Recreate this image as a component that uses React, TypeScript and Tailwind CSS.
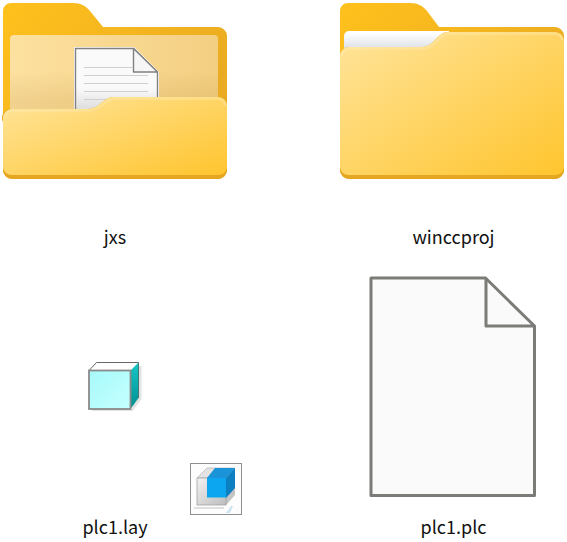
function FolderOpen() {
  return (
    <svg width="230" height="190" viewBox="0 0 230 190" className="block">
      <defs>
        <linearGradient id="b1" x1="0" y1="0" x2="1" y2="0.6">
          <stop offset="0" stopColor="#FFC11C" />
          <stop offset="1" stopColor="#E9A922" />
        </linearGradient>
        <linearGradient id="p1" x1="0" y1="0" x2="1" y2="0">
          <stop offset="0" stopColor="#FDE1A0" />
          <stop offset="1" stopColor="#F3CF82" />
        </linearGradient>
        <linearGradient id="p1s" x1="0" y1="0" x2="0" y2="1">
          <stop offset="0.4" stopColor="#B08030" stopOpacity="0" />
          <stop offset="0.72" stopColor="#B08030" stopOpacity="0.16" />
        </linearGradient>
        <linearGradient id="f1" x1="0" y1="0" x2="1" y2="1">
          <stop offset="0" stopColor="#FFE49B" />
          <stop offset="1" stopColor="#FFC52E" />
        </linearGradient>
        <linearGradient id="d1" x1="0" y1="0" x2="0" y2="1">
          <stop offset="0.55" stopColor="#FAFAFA" />
          <stop offset="0.85" stopColor="#DEDEDE" />
        </linearGradient>
      </defs>
      <path d="M3 11a8 8 0 0 1 8-8h62c8 0 13 3 17 8l13 16h115a9 9 0 0 1 9 9v134a9 9 0 0 1-9 9H12a9 9 0 0 1-9-9Z" fill="url(#b1)" />
      <rect x="10" y="35" width="208" height="90" rx="4" fill="url(#p1)" />
      <rect x="10" y="35" width="208" height="90" rx="4" fill="url(#p1s)" />
      <path d="M75.500 48.500h58l24 24V120h-82Z" fill="url(#d1)" stroke="#fff" strokeWidth="3" />
      <path d="M75.500 48.500h58l24 24V120h-82Z" fill="url(#d1)" stroke="#808080" strokeWidth="1.4" />
      <path d="M133.500 48.500v23.500h24Z" fill="#F6F6F6" stroke="#808080" strokeWidth="1.4" strokeLinejoin="round" />
      <path d="M84 67.500h48M84 75.500h64M84 83.500h64M84 91.500h64M84 99.500h64" stroke="#CFCFCF" strokeWidth="1" />
      <path d="M3 122a9 9 0 0 1 9-13h73c8 0 12-2 16-6 5-4 8-6 13-6h104a9 9 0 0 1 9 9v64a9 9 0 0 1-9 9H12a9 9 0 0 1-9-9Z" fill="#E5A722" />
      <path d="M3 118a9 9 0 0 1 9-9h73c8 0 12-2 16-6 5-4 8-6 13-6h104a9 9 0 0 1 9 9v61a9 8 0 0 1-9 8H12a9 8 0 0 1-9-8Z" fill="url(#f1)" />
      <path d="M4.500 118a7.500 7.500 0 0 1 7.500-7.500h73c9 0 13-2 17-6 5-4 8-6 12-6h104a8 8 0 0 1 7.500 7" fill="none" stroke="#FFEBB0" strokeOpacity="0.4" strokeWidth="3" />
    </svg>
  );
}

function FolderClosed() {
  return (
    <svg width="227" height="190" viewBox="340 0 227 190" className="block">
      <defs>
        <linearGradient id="b2" x1="0" y1="0" x2="1" y2="0.6">
          <stop offset="0" stopColor="#FFC11C" />
          <stop offset="1" stopColor="#E9A922" />
        </linearGradient>
        <linearGradient id="p2" x1="0" y1="0" x2="0" y2="1">
          <stop offset="0.1" stopColor="#FFFFFF" />
          <stop offset="1" stopColor="#D8DCE2" />
        </linearGradient>
        <linearGradient id="f2" x1="0" y1="0" x2="1" y2="1">
          <stop offset="0" stopColor="#FFE49B" />
          <stop offset="1" stopColor="#FFC52E" />
        </linearGradient>
      </defs>
      <path d="M340 11a8 8 0 0 1 8-8h62c8 0 13 3 17 8l12 16h116a9 9 0 0 1 9 9v134a9 9 0 0 1-9 9H349a9 9 0 0 1-9-9Z" fill="url(#b2)" />
      <path d="M344 36a5 5 0 0 1 5-5h100v20H344Z" fill="url(#p2)" />
      <path d="M340 56a9 9 0 0 1 9-9h70c8 0 11-2 15-6 5-5 8-9 14-9h107a9 9 0 0 1 9 9v129a9 9 0 0 1-9 9H349a9 9 0 0 1-9-9Z" fill="#E5A722" />
      <path d="M340 56a9 9 0 0 1 9-9h70c8 0 11-2 15-6 5-5 8-9 14-9h107a9 9 0 0 1 9 9v126a9 8 0 0 1-9 8H349a9 8 0 0 1-9-8Z" fill="url(#f2)" />
      <path d="M341.500 56a7.500 7.500 0 0 1 7.500-7.500h70c9 0 12-2 16-6 5-5 8-9 13-9h107a8 8 0 0 1 7.500 7" fill="none" stroke="#FFEBB0" strokeOpacity="0.4" strokeWidth="3" />
    </svg>
  );
}

function TealCube() {
  return (
    <svg width="54" height="52" viewBox="88 362 54 52" className="block">
      <defs>
        <linearGradient id="tf" x1="0" y1="0" x2="1" y2="1">
          <stop offset="0" stopColor="#A6FAFA" />
          <stop offset="1" stopColor="#C6FFFF" />
        </linearGradient>
        <linearGradient id="ts" x1="0" y1="0" x2="0" y2="1">
          <stop offset="0" stopColor="#18C6C6" />
          <stop offset="1" stopColor="#008E90" />
        </linearGradient>
      </defs>
      <path d="M139 366h2.500v33l-9 12H92v-1.500h40Z" fill="#E2E2E2" />
      <path d="M89 370l7.500-7.500h42L130.500 370Z" fill="#fff" />
      <path d="M89.500 370l7-7.500h42" fill="none" stroke="#666" strokeWidth="1" />
      <path d="M130.500 370.500l8-8V398l-8 11Z" fill="url(#ts)" />
      <path d="M138.500 362.500V398" stroke="#3E6E6E" strokeWidth="0.9" />
      <rect x="89" y="370.500" width="41.500" height="38.500" fill="url(#tf)" stroke="#8A8A8A" strokeWidth="1.8" />
    </svg>
  );
}

function BlueCube() {
  return (
    <svg width="52" height="52" viewBox="190 463 52 52" className="block">
      <defs>
        <linearGradient id="gc" x1="0" y1="0" x2="1" y2="1">
          <stop offset="0" stopColor="#F2F2F2" />
          <stop offset="1" stopColor="#BDBDBD" />
        </linearGradient>
      </defs>
      <rect x="190.500" y="463.500" width="51" height="51" fill="#FDFDFD" stroke="#8F8F8F" />
      <path d="M197 478l10-10h28l-9 10Z" fill="#E3E3E3" stroke="#AAA" strokeWidth="0.6" />
      <path d="M226 478l9-10v27l-9 10Z" fill="#C4C4C4" />
      <rect x="197" y="478" width="29" height="27" fill="url(#gc)" stroke="#A4A4A4" strokeWidth="0.8" />
      <path d="M207 478l8-10h20l-9 10Z" fill="#1A93D8" />
      <path d="M226 478l9-10v20l-9 10Z" fill="#0B7FC0" />
      <rect x="207" y="478" width="19" height="19.500" fill="#0CA6F0" />
      <path d="M194 507h30v2h-30Z" fill="#E0E0E0" />
      <path d="M226 513l5-7h2l-3 7Z" fill="#CFE4F2" />
    </svg>
  );
}

function BlankDoc() {
  return (
    <svg width="170" height="224" viewBox="368 275 170 224" className="block">
      <path d="M371 278h114.500l49 48V495.500H371Z" fill="#FAFAFA" stroke="#7B7B78" strokeWidth="3" strokeLinejoin="round" />
      <path d="M486 278v48h48.500" fill="none" stroke="#7B7B78" strokeWidth="3" strokeLinejoin="round" />
    </svg>
  );
}

function Label({ children }: { children: string }) {
  return (
    <div className="h-6 leading-6 text-center text-[18px] text-[#111] font-['Noto_Sans_CJK_SC','Noto_Sans',sans-serif]">
      {children}
    </div>
  );
}

export default function App() {
  return (
    <div className="w-[567px] h-[542px] bg-white overflow-hidden grid grid-cols-[340px_227px] grid-rows-[255px_287px]">
      <div className="w-[230px]">
        <FolderOpen />
        <div className="mt-[34px]"><Label>jxs</Label></div>
      </div>
      <div>
        <FolderClosed />
        <div className="mt-[34px]"><Label>winccproj</Label></div>
      </div>
      <div className="w-[230px]">
        <div className="ml-[88px] mt-[107px]"><TealCube /></div>
        <div className="ml-[190px] mt-[49px]"><BlueCube /></div>
        <div className="-mt-px"><Label>plc1.lay</Label></div>
      </div>
      <div>
        <div className="ml-[28px] mt-[20px]"><BlankDoc /></div>
        <div className="mt-[15px]"><Label>plc1.plc</Label></div>
      </div>
    </div>
  );
}
